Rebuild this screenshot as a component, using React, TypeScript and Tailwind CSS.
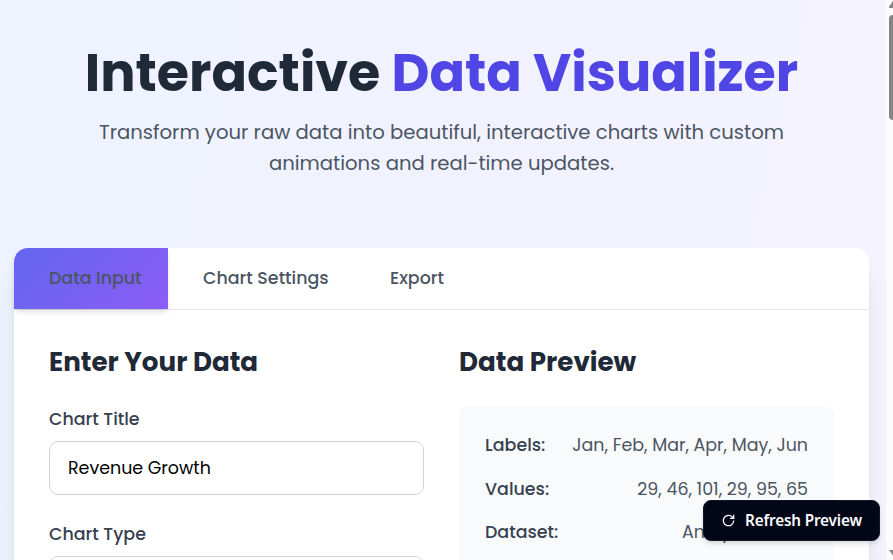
import type { ReactNode } from 'react';

function Row({ label, children }: { label: string; children: ReactNode }) {
  return (
    <div className="flex h-[43.6px] items-start justify-between whitespace-nowrap leading-[26px]">
      <span className="font-medium text-[#374151]">{label}</span>
      <span>{children}</span>
    </div>
  );
}

function RefreshIcon() {
  return (
    <svg className="h-[15px] w-[15px]" viewBox="0 0 15 15" fill="none" stroke="currentColor" strokeWidth="1.3">
      <path d="M12.7 7.5A5.2 5.2 0 1 1 11.3 3.95L12.6 5.3" />
      <path d="M12.7 1.8v3.6H9.1" />
    </svg>
  );
}

export default function App() {
  return (
    <div className="relative flex h-[560px] w-[893px] overflow-hidden bg-[#fcfcfc] font-['Poppins','Inter',sans-serif] text-[17.4545px]">
      <main className="h-[560px] w-[886px] shrink-0 overflow-hidden bg-[linear-gradient(105deg,#eef3ff_0%,#f1f2ff_40%,#f5f3ff_100%)] pl-[14px]">
        <header className="flex h-[248px] w-[855px] flex-col items-center pt-[38px]">
          <h1 className="h-[70px] whitespace-nowrap text-[52.36px] font-bold leading-[70px] text-[#1f2937]">
            Interactive <span className="text-[#4f46e5]">Data Visualizer</span>
          </h1>
          <p className="mt-[9px] w-[733px] text-center text-[19.636px] leading-[31px] text-[#4b5563]">
            Transform your raw data into beautiful, interactive charts with custom animations and real-time updates.
          </p>
        </header>

        <section className="h-[600px] w-[855px] rounded-[14px] bg-white shadow-[0_22px_27px_-5px_rgba(15,23,62,0.1),0_9px_11px_-6px_rgba(15,23,62,0.1)]">
          <nav className="flex h-[62px] border-b border-[#e5e7eb] font-medium leading-[59px] text-[#4b5563]">
            <button className="h-[61px] w-[154px] rounded-tl-[14px] bg-[linear-gradient(135deg,#6366f1,#8b5cf6)] pl-[35px] text-left shadow-[0_4px_6px_-1px_rgba(0,0,0,0.1),0_2px_4px_-2px_rgba(0,0,0,0.1)]">Data Input</button>
            <button className="h-[61px] w-[187px] pl-[35px] text-left">Chart Settings</button>
            <button className="h-[61px] w-[124px] pl-[35px] text-left">Export</button>
          </nav>
          <div className="grid grid-cols-2 gap-[35px] px-[35px] pt-[35px]">
            <div>
              <h2 className="h-[34px] text-[26.18px] font-bold leading-[34px] text-[#1f2937]">Enter Your Data</h2>
              <label className="mt-[27px] block h-[26px] font-medium leading-[26px] text-[#374151]">Chart Title</label>
              <input className="mt-[9px] block h-[54px] w-full rounded-[9px] border border-[#d1d5db] bg-white px-[18px] text-black outline-none" defaultValue="Revenue Growth" />
              <label className="mt-[26px] block h-[26px] font-medium leading-[26px] text-[#374151]">Chart Type</label>
              <div className="mt-[9px] h-[54px] rounded-[9px] border border-[#d1d5db] bg-white" />
            </div>
            <div>
              <h2 className="h-[34px] text-[26.18px] font-bold leading-[34px] text-[#1f2937]">Data Preview</h2>
              <div className="mt-[27px] h-[260px] rounded-[9px] bg-[#f9fafb] px-[26px] pt-[26px] text-[#4b5563]">
                <Row label="Labels:">Jan, Feb, Mar, Apr, May, Jun</Row>
                <Row label="Values:">29, 46, 101, 29, 95, 65</Row>
                <Row label="Dataset:">Analytics Data</Row>
              </div>
            </div>
          </div>
        </section>
      </main>

      <aside className="flex h-[560px] w-[7px] flex-col justify-between overflow-hidden pl-[3px]">
        <svg className="h-[8px] w-[10px] shrink-0" viewBox="0 0 10 8" fill="#858585"><path d="M0 8V6.500L4 1h2l4 7z" /></svg>
        <div className="mb-auto mt-[7px] h-[105px] w-[8px] shrink-0 rounded-[4px] bg-[#858585]" />
        <svg className="mb-[2px] h-[8px] w-[10px] shrink-0" viewBox="0 0 10 8" fill="#858585"><path d="M0 0h10L5 7z" /></svg>
      </aside>

      <button className="absolute left-[703px] top-[500px] flex h-[41px] w-[177px] items-center gap-[9px] whitespace-nowrap rounded-[8px] border border-[#0f172a] bg-[#020617] pl-[17px] font-['Noto_Sans',sans-serif] text-[15.27px] font-semibold tracking-[-0.15px] text-[#f8fafc] shadow-[0_4px_6px_-1px_rgba(0,0,0,0.1),0_2px_4px_-2px_rgba(0,0,0,0.1)]">
        <RefreshIcon />
        Refresh Preview
      </button>
    </div>
  );
}
